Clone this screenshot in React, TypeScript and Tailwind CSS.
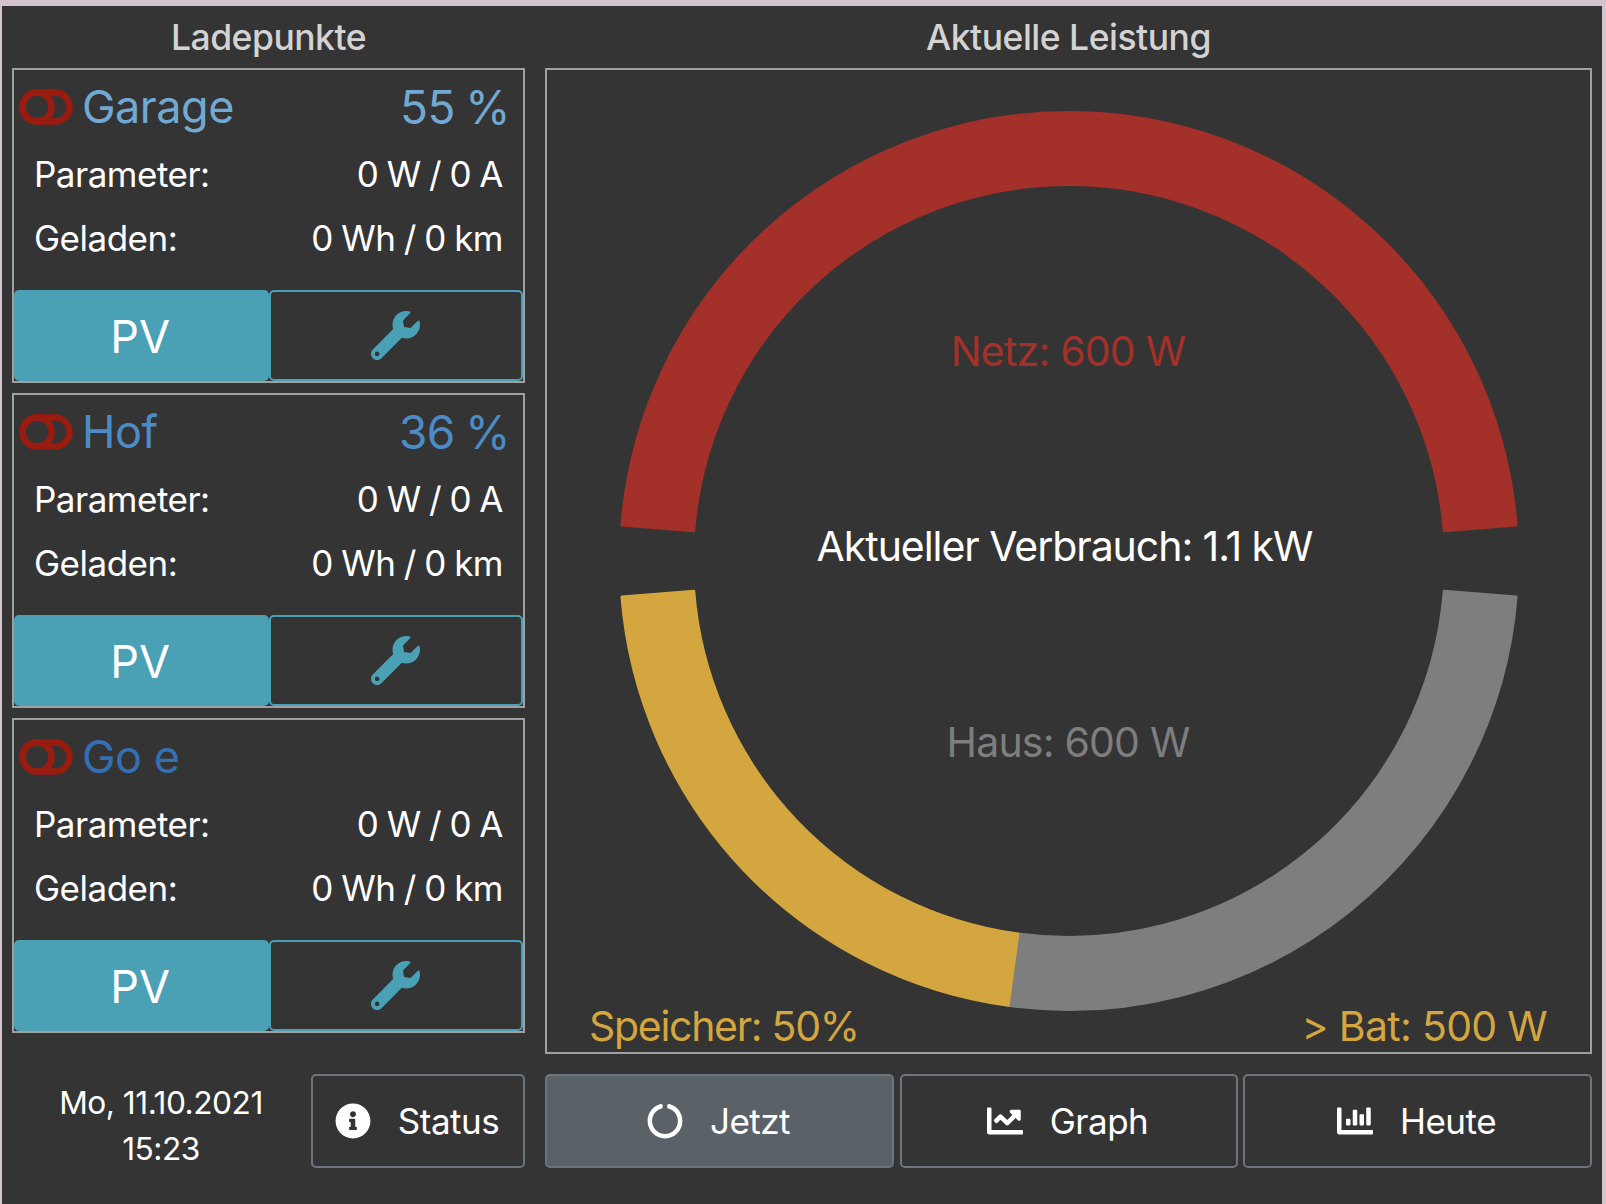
import type { ReactNode } from "react";
import { FaChartBar, FaChartLine, FaCircleNotch, FaInfoCircle, FaWrench } from "react-icons/fa";

const font = { fontFamily: "Inter, 'Noto Sans', sans-serif" };

const toRad = (deg: number) => (deg * Math.PI) / 180;

// angles run clockwise from 12 o'clock
const arcPath = (start: number, end: number) => {
  const cx = 522;
  const cy = 491;
  const outer = 448.5;
  const inner = 376.5;
  const pt = (r: number, a: number) =>
    `${(cx + r * Math.sin(toRad(a))).toFixed(2)} ${(cy - r * Math.cos(toRad(a))).toFixed(2)}`;
  const large = end - start > 180 ? 1 : 0;
  return `M${pt(outer, start)} A${outer} ${outer} 0 ${large} 1 ${pt(outer, end)} L${pt(inner, end)} A${inner} ${inner} 0 ${large} 0 ${pt(inner, start)} Z`;
};

const ToggleIcon = () => (
  <svg width="54" height="36" viewBox="0 0 54 36" className="shrink-0">
    <rect x="3.5" y="3.5" width="47" height="29" rx="14.5" fill="none" stroke="#9a1b10" strokeWidth="6.5" />
    <circle cx="18" cy="18" r="14.5" fill="none" stroke="#9a1b10" strokeWidth="6.5" />
  </svg>
);

type ChargePointProps = {
  name: string;
  soc?: string;
  color: string;
};

const ChargePoint = ({ name, soc, color }: ChargePointProps) => (
  <div className="flex h-[315px] flex-col border-2 border-[#a0a0a0]">
    <div className="flex h-[74px] items-center pl-[5px] pr-[13px]">
      <ToggleIcon />
      <span className="ml-[9px] text-[45px] tracking-[-0.5px]" style={{ color }}>
        {name}
      </span>
      {soc && (
        <span className="ml-auto text-[46px] tracking-[-0.5px] [word-spacing:-2px]" style={{ color }}>
          {soc}
        </span>
      )}
    </div>
    <div className="mt-[2px] flex h-[56px] items-center justify-between pl-[20px] pr-[20px] text-[35px] tracking-[-0.5px] text-white [word-spacing:-1px]">
      <span>Parameter:</span>
      <span>0 W / 0 A</span>
    </div>
    <div className="mt-[8px] flex h-[56px] items-center justify-between pl-[20px] pr-[20px] text-[35px] tracking-[-0.5px] text-white [word-spacing:-1px]">
      <span>Geladen:</span>
      <span>0 Wh / 0 km</span>
    </div>
    <div className="mt-auto grid grid-cols-2">
      <button className="flex h-[91px] items-center justify-center rounded-[5px] bg-[#4aa0b5] pr-[2px] pt-[3px] text-[45px] text-white">
        PV
      </button>
      <button className="flex h-[91px] items-center justify-center rounded-[5px] border-2 border-[#4aa0b5] text-[#4aa0b5]">
        <FaWrench size={49} />
      </button>
    </div>
  </div>
);

type NavButtonProps = {
  icon: ReactNode;
  label: string;
  active?: boolean;
  className?: string;
};

const NavButton = ({ icon, label, active, className }: NavButtonProps) => (
  <button
    className={`flex h-[94px] items-center justify-center gap-[27px] rounded-[5px] border-2 border-[#6c757d] pr-[2px] text-[35px] tracking-[-0.5px] text-white ${
      active ? "bg-[#5a6268] border-[#5a6268]" : ""
    } ${className ?? ""}`}
  >
    {icon}
    {label}
  </button>
);

export default function App() {
  return (
    <div className="h-[1204px] overflow-hidden bg-[#d3c3cd] pl-[2px] pr-[4px] pt-[6px]" style={font}>
      <div className="flex h-full gap-[20px] bg-[#343434] px-[10px]">
        <div className="flex w-[514px] flex-col">
          <h2 className="flex h-[62px] items-center justify-center pt-[2px] text-[35.5px] font-medium tracking-[-0.5px] text-[#d3d3d3]">
            Ladepunkte
          </h2>
          <div className="flex flex-col gap-[10px]">
            <ChargePoint name="Garage" soc="55 %" color="#71a9d3" />
            <ChargePoint name="Hof" soc="36 %" color="#4c8cc6" />
            <ChargePoint name="Go e" color="#346fb4" />
          </div>
          <div className="mt-[41px] flex items-start">
            <div className="mt-[6px] flex-1 pl-[2px] pr-[3px] text-center text-[31.7px] leading-[46px] tracking-[-0.5px] text-white">
              <div>Mo, 11.10.2021</div>
              <div>15:23</div>
            </div>
            <NavButton icon={<FaInfoCircle size={36} />} label="Status" className="w-[214px]" />
          </div>
        </div>

        <div className="flex w-[1047px] flex-col">
          <h2 className="flex h-[62px] items-center justify-center pt-[2px] text-[35.5px] font-medium tracking-[-0.5px] text-[#d3d3d3]">
            Aktuelle Leistung
          </h2>
          <div className="h-[986px] border-2 border-[#a0a0a0]">
            <svg viewBox="0 0 1043 982" className="block h-full w-full" style={font}>
              <path d={arcPath(-85.4, 85.4)} fill="#a4302a" stroke="#a4302a" strokeWidth="3" strokeLinejoin="round" />
              <path d={arcPath(94.6, 187.8)} fill="#7e7e7e" stroke="#7e7e7e" strokeWidth="3" strokeLinejoin="round" />
              <path d={arcPath(187.8, 265.4)} fill="#d3a63f" stroke="#d3a63f" strokeWidth="3" strokeLinejoin="round" />
              <text x="521" y="296" textAnchor="middle" fontSize="41" letterSpacing="-0.8" fill="#a4302a">
                Netz: 600 W
              </text>
              <text x="517.5" y="491" textAnchor="middle" fontSize="41" letterSpacing="-1.05" fill="#ffffff">
                Aktueller Verbrauch: 1.1 kW
              </text>
              <text x="521" y="687" textAnchor="middle" fontSize="41" letterSpacing="-0.8" fill="#7e7e7e">
                Haus: 600 W
              </text>
              <text x="42" y="971" fontSize="41" letterSpacing="-1.3" fill="#d3a63f">
                Speicher: 50%
              </text>
              <text x="1000" y="971" textAnchor="end" fontSize="41" letterSpacing="-0.7" fill="#d3a63f">
                &gt; Bat: 500 W
              </text>
            </svg>
          </div>
          <div className="mt-[20px] grid grid-cols-[349px_338px_349px] gap-[5.5px]">
            <NavButton active icon={<FaCircleNotch size={36} />} label="Jetzt" />
            <NavButton icon={<FaChartLine size={36} />} label="Graph" />
            <NavButton icon={<FaChartBar size={36} />} label="Heute" />
          </div>
        </div>
      </div>
    </div>
  );
}
